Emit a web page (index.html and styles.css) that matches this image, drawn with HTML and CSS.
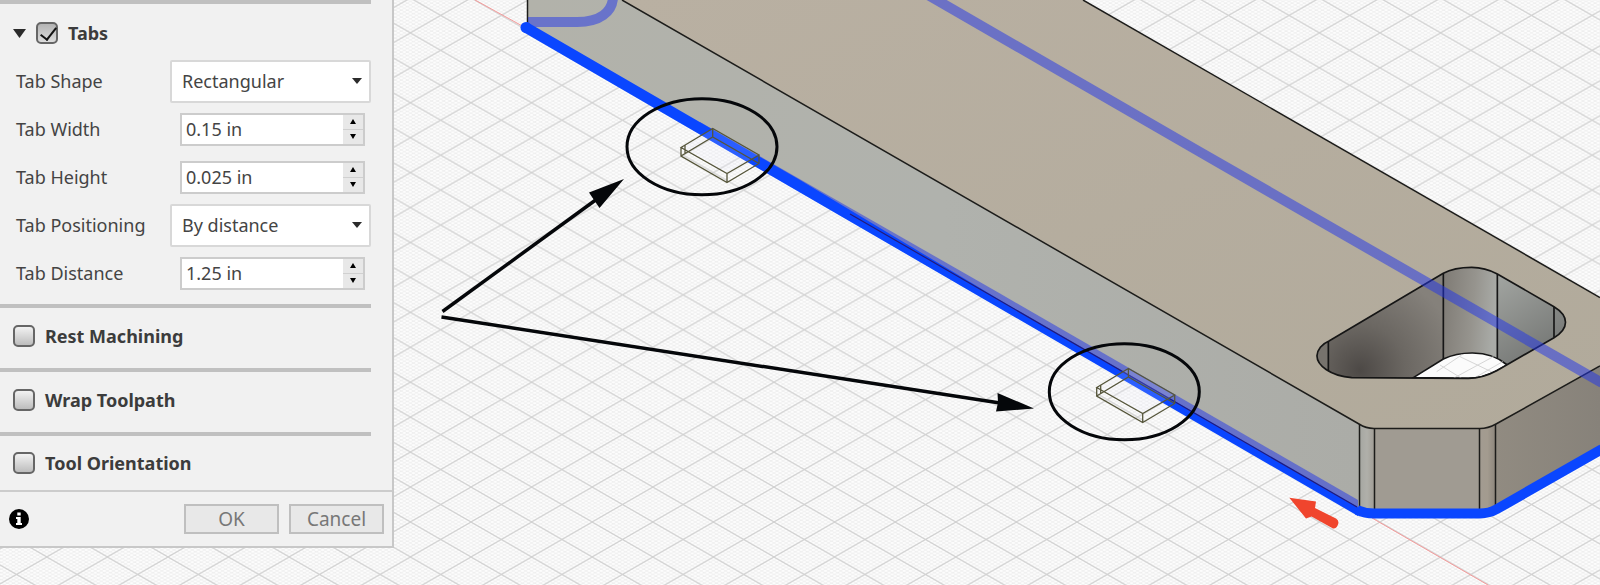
FILE: index.html
```
<!DOCTYPE html>
<html lang="en">
<head>
    <meta charset="UTF-8">
    <meta name="viewport" content="width=device-width, initial-scale=1.0">
    <title>2D Contour - Tabs</title>
    <link rel="stylesheet" href="styles.css">
</head>
<body>

<div class="workspace">

    <!-- Model view -->
    <svg class="model-view" viewBox="0 0 1600 585" preserveAspectRatio="xMinYMin slice" role="img" aria-label="Part with tabs on the contour">
        <defs>
            <pattern id="grid-minor" width="6.06" height="3.494" patternUnits="userSpaceOnUse" patternTransform="translate(410.4 522)">
                <path d="M0 0L6.06 3.494M0 3.494L6.06 0" stroke="#e6e6e6" stroke-width="0.6"/>
            </pattern>
            <pattern id="grid-major" width="60.6" height="34.94" patternUnits="userSpaceOnUse" patternTransform="translate(410.4 522)">
                <path d="M0 0L60.6 34.94M0 34.94L60.6 0" stroke="#d0d0d0" stroke-width="1.1"/>
            </pattern>
            <linearGradient id="top-face" x1="0" y1="0" x2="1" y2="1">
                <stop offset="0" stop-color="#b9b0a2"/>
                <stop offset="1" stop-color="#b1aa9b"/>
            </linearGradient>
            <linearGradient id="side-face" x1="0" y1="0" x2="1" y2="0">
                <stop offset="0" stop-color="#b2b2aa"/>
                <stop offset="0.5" stop-color="#b0b2ad"/>
                <stop offset="1" stop-color="#abaca7"/>
            </linearGradient>
            <linearGradient id="right-face" x1="0" y1="0" x2="1" y2="0">
                <stop offset="0" stop-color="#918b81"/>
                <stop offset="1" stop-color="#87827a"/>
            </linearGradient>
            <linearGradient id="corner-left" x1="0" y1="0" x2="1" y2="0">
                <stop offset="0" stop-color="#a5a6a1"/>
                <stop offset="0.5" stop-color="#b0b0aa"/>
                <stop offset="1" stop-color="#a09c94"/>
            </linearGradient>
            <linearGradient id="corner-right" x1="0" y1="0" x2="1" y2="0">
                <stop offset="0" stop-color="#a29b91"/>
                <stop offset="0.5" stop-color="#a39b8f"/>
                <stop offset="1" stop-color="#8d867c"/>
            </linearGradient>
            <radialGradient id="slot-left" gradientUnits="userSpaceOnUse" cx="240" cy="390" r="300">
                <stop offset="0" stop-color="#4d4946"/>
                <stop offset="0.45" stop-color="#6b6762"/>
                <stop offset="1" stop-color="#85817b"/>
            </radialGradient>
            <linearGradient id="slot-mid" x1="0" y1="0" x2="1" y2="0.2">
                <stop offset="0" stop-color="#7e7a74"/>
                <stop offset="0.6" stop-color="#96948e"/>
                <stop offset="1" stop-color="#a9aba7"/>
            </linearGradient>
            <linearGradient id="slot-right" x1="0" y1="0" x2="0.4" y2="1">
                <stop offset="0" stop-color="#a7aaa6"/>
                <stop offset="1" stop-color="#6f716f"/>
            </linearGradient>
            <clipPath id="slot-clip">
                <path d="M147 303L490 100C515 86 545 82 575 82C605 82 630 90 652 102L822 200C868 228 868 265 822 293L650 392C620 408 595 415 565 415L215 413C150 408 110 375 111 347C112 330 125 312 147 303Z"/>
            </clipPath>
            <g id="tab-box">
                <path d="M681 147.500L712.700 128.500L759 155L727 173.500Z" fill="#e8e8ff" fill-opacity="0.15"/>
                <path d="M681 147.500L712.700 128.500L759 155L727 173.500ZM681 147.500V156L727 182.500L759 163.500V155M727 173.500V182.500M681 156L712.700 137L759 163.500M712.700 128.500V137M685 145.500V153.500" fill="none" stroke="#55553a" stroke-width="1.3"/>
            </g>
        </defs>

        <rect width="1600" height="585" fill="#fdfdfd"/>
        <rect width="1600" height="585" fill="url(#grid-minor)"/>
        <rect width="1600" height="585" fill="url(#grid-major)"/>

        <!-- X axis -->
        <path d="M475 0L526 28M1372 518L1488 585" stroke="#f59a9a" stroke-width="1"/>

        <!-- Part faces -->
        <path d="M622 0H1083L1600 297.500V366L1496 424Q1488 428.500 1480 428.500H1374Q1366 428.500 1359 424Z" fill="url(#top-face)"/>
        <path d="M527 0H622L1359.500 424V509L527 27Z" fill="url(#side-face)"/>
        <path d="M1359.500 424Q1366 428.500 1374.500 428.500V512L1359.500 509Z" fill="url(#corner-left)"/>
        <rect x="1374.500" y="428.500" width="105" height="84" fill="#a09b92"/>
        <path d="M1479.500 428.500Q1488 428.500 1495.500 424V509L1479.500 512Z" fill="url(#corner-right)"/>
        <path d="M1495.500 424L1600 366V449L1495.500 509Z" fill="url(#right-face)"/>

        <!-- Slot -->
        <g transform="translate(1280 240) scale(0.33333)" stroke-width="5" stroke="#161616" fill="none">
            <g clip-path="url(#slot-clip)">
                <rect x="100" y="70" width="390" height="360" fill="url(#slot-left)" stroke="none"/>
                <rect x="490" y="70" width="162" height="360" fill="url(#slot-mid)" stroke="none"/>
                <rect x="652" y="70" width="220" height="360" fill="url(#slot-right)" stroke="none"/>
                <rect x="100" y="290" width="45" height="130" fill="#77736d" stroke="none"/>
                <path d="M400 413L490 357C530 338 620 322 682 375L650 392C620 408 595 415 565 415Z" fill="#fbfbfb"/>
                <path d="M470 395L545 345M520 415L640 350M590 410L668 365M480 375L545 415M540 350L640 398" stroke="#d5d5d5" stroke-width="3"/>
                <path d="M145 303V393M490 100V357M652 102V355M822 200V293"/>
            </g>
            <path d="M147 303L490 100C515 86 545 82 575 82C605 82 630 90 652 102L822 200C868 228 868 265 822 293L650 392C620 408 595 415 565 415L215 413C150 408 110 375 111 347C112 330 125 312 147 303Z"/>
        </g>

        <!-- Part edges -->
        <g fill="none" stroke="#1c1c1a" stroke-width="1.5">
            <path d="M622 0L1359 424Q1366 428.500 1374 428.500H1480Q1488 428.500 1496 424L1600 366"/>
            <path d="M1083 0L1600 297.500"/>
            <path d="M527.500 0V26M1359.500 424V508M1374.500 428.500V512M1479.500 428.500V512M1495.500 424V508"/>
        </g>

        <!-- Hidden contour seen through the part -->
        <g fill="none" stroke="#1f33ea" stroke-opacity="0.5">
            <path d="M928 -5L1200 152L1602 383" stroke-width="10"/>
            <path d="M528 22H577C600 22 612 12 613 -2" stroke-width="10"/>
        </g>
        <path d="M700 122L1000 293.500L1358 500V507L1000 301L700 124Z" fill="#1f33ea" fill-opacity="0.5"/>

        <!-- Contour -->
        <path d="M527 22L800 180L1000 300L1358 507V516L524 32.500Z" fill="#0a46ff"/>
        <circle cx="526" cy="27.500" r="5.500" fill="#0a46ff"/>
        <path d="M1357 510Q1365 513.500 1374 513.500H1480Q1489 513.500 1497 509L1602 449" fill="none" stroke="#0a46ff" stroke-width="10"/>
        <path d="M850 214L1357 507" stroke="#241a78" stroke-width="1.2"/>

        <use href="#tab-box"/>
        <use href="#tab-box" x="415.700" y="240"/>

        <!-- Direction arrow -->
        <path d="M1289.300 497.700L1316 501.500L1315 508L1336 518.500Q1339.500 521 1338 524.500Q1336.500 529 1333 528.500L1311.500 516.500L1306 518.500Z" fill="#f0452d"/>

        <!-- Callouts -->
        <g fill="none" stroke="#05070a" stroke-width="3">
            <ellipse cx="702" cy="146.700" rx="75" ry="48"/>
            <ellipse cx="1124.300" cy="391.700" rx="75" ry="48"/>
            <path d="M442.500 311.500L597 199" stroke-width="3.500"/>
            <path d="M441.500 317L1000 403" stroke-width="3.500"/>
        </g>
        <path d="M624 179L589 192.500L594 200L599.500 208ZM1034 408.500L997.500 393L998 402.500L996 411.500Z" fill="#05070a"/>
    </svg>

    <!-- Tool panel -->
    <form class="panel">
        <div class="section">
            <div class="section-header open">
                <svg class="collapse-icon" viewBox="0 0 13 9" aria-hidden="true"><path d="M0 0H13L6.500 9Z" fill="#2b2b2b"/></svg>
                <input type="checkbox" id="tabs" checked>
                <label for="tabs">Tabs</label>
            </div>

            <div class="field">
                <label for="tab-shape">Tab Shape</label>
                <div class="select-box">
                    <select id="tab-shape">
                        <option>Rectangular</option>
                        <option>Triangular</option>
                    </select>
                    <svg viewBox="0 0 10 6" aria-hidden="true"><path d="M0 0H10L5 6Z" fill="#2b2b2b"/></svg>
                </div>
            </div>

            <div class="field">
                <label for="tab-width">Tab Width</label>
                <div class="number-box">
                    <input type="text" id="tab-width" value="0.15 in">
                    <div class="spinner">
                        <button type="button" aria-label="Increase width"><svg viewBox="0 0 6 5"><path d="M0 5H6L3 0Z"/></svg></button>
                        <button type="button" aria-label="Decrease width"><svg viewBox="0 0 6 5"><path d="M0 0H6L3 5Z"/></svg></button>
                    </div>
                </div>
            </div>

            <div class="field">
                <label for="tab-height">Tab Height</label>
                <div class="number-box">
                    <input type="text" id="tab-height" value="0.025 in">
                    <div class="spinner">
                        <button type="button" aria-label="Increase height"><svg viewBox="0 0 6 5"><path d="M0 5H6L3 0Z"/></svg></button>
                        <button type="button" aria-label="Decrease height"><svg viewBox="0 0 6 5"><path d="M0 0H6L3 5Z"/></svg></button>
                    </div>
                </div>
            </div>

            <div class="field">
                <label for="tab-positioning">Tab Positioning</label>
                <div class="select-box">
                    <select id="tab-positioning">
                        <option>By distance</option>
                        <option>At points</option>
                    </select>
                    <svg viewBox="0 0 10 6" aria-hidden="true"><path d="M0 0H10L5 6Z" fill="#2b2b2b"/></svg>
                </div>
            </div>

            <div class="field">
                <label for="tab-distance">Tab Distance</label>
                <div class="number-box">
                    <input type="text" id="tab-distance" value="1.25 in">
                    <div class="spinner">
                        <button type="button" aria-label="Increase distance"><svg viewBox="0 0 6 5"><path d="M0 5H6L3 0Z"/></svg></button>
                        <button type="button" aria-label="Decrease distance"><svg viewBox="0 0 6 5"><path d="M0 0H6L3 5Z"/></svg></button>
                    </div>
                </div>
            </div>
        </div>

        <div class="section">
            <div class="section-header">
                <input type="checkbox" id="rest-machining">
                <label for="rest-machining">Rest Machining</label>
            </div>
        </div>

        <div class="section">
            <div class="section-header">
                <input type="checkbox" id="wrap-toolpath">
                <label for="wrap-toolpath">Wrap Toolpath</label>
            </div>
        </div>

        <div class="section">
            <div class="section-header">
                <input type="checkbox" id="tool-orientation">
                <label for="tool-orientation">Tool Orientation</label>
            </div>
        </div>

        <div class="panel-footer">
            <svg class="info-icon" viewBox="0 0 20 20" role="img" aria-label="Info">
                <circle cx="10" cy="10" r="10" fill="#000"/>
                <path d="M8.300 3.500H11.700V6.500H8.300ZM7 8H11.700V14H13V16H7V14H8.300V10H7Z" fill="#fff"/>
            </svg>
            <button type="button" class="footer-btn">OK</button>
            <button type="button" class="footer-btn">Cancel</button>
        </div>
    </form>

</div>

</body>
</html>
```
FILE: styles.css
```
* {
    box-sizing: border-box;
}

body {
    margin: 0;
    font-family: "Lucida Grande", "Noto Sans", sans-serif;
    font-size: 18px;
    color: #444;
    background-color: #fdfdfd;
}

.workspace {
    display: grid;
    min-height: 100vh;
    overflow: hidden;
}

/* the panel floats over the model view, both share one cell */
.model-view,
.panel {
    grid-area: 1 / 1;
}

.model-view {
    width: 100%;
    height: 100vh;
}

.panel {
    position: relative;
    justify-self: start;
    align-self: start;
    width: 394px;
    background-color: #f1f1f1;
    border-right: 2px solid #c8c8c8;
    border-bottom: 2px solid #c8c8c8;
}

.section {
    margin-right: 21px;
    padding-bottom: 4px;
    border-top: 4px solid #c0c0c0;
}

.section:first-child {
    padding-bottom: 7px;
}

.section-header {
    display: flex;
    align-items: center;
    gap: 10px;
    height: 56px;
    padding-left: 13px;
    font-weight: bold;
    color: #3c3c3c;
}

.section-header.open {
    height: 53px;
    padding-top: 5px;
}

.collapse-icon {
    width: 13px;
    height: 9px;
}

input[type="checkbox"] {
    appearance: none;
    width: 22px;
    height: 22px;
    margin: 0;
    border: 2px solid #666;
    border-radius: 5px;
    background: linear-gradient(#f2f2f2, #bdbdbd);
}

input[type="checkbox"]:checked {
    background: linear-gradient(#b4b4b4, #dcdcdc);
}

input[type="checkbox"]:checked::after {
    content: "";
    display: block;
    width: 7px;
    height: 14px;
    margin-left: 6px;
    border: solid #111;
    border-width: 0 2px 2px 0;
    transform: rotate(38deg);
}

.field {
    display: grid;
    grid-template-columns: 154px minmax(0, 1fr);
    align-items: center;
    height: 48px;
    padding-left: 16px;
}

.select-box {
    position: relative;
}

.select-box select {
    appearance: none;
    display: block;
    width: 100%;
    height: 43px;
    padding: 0 10px;
    font: inherit;
    color: inherit;
    background-color: #fff;
    border: 2px solid #d8d8d8;
    border-radius: 2px;
}

.select-box svg {
    position: absolute;
    top: 18px;
    right: 9px;
    width: 10px;
    height: 6px;
    pointer-events: none;
}

.number-box {
    display: flex;
    height: 33px;
    margin: 0 6px 0 10px;
    background-color: #fff;
    border: 2px solid #ccc;
}

.number-box input {
    flex: 1;
    min-width: 0;
    padding: 0 4px;
    font: inherit;
    color: inherit;
    background: none;
    border: none;
}

.spinner {
    display: flex;
    flex-direction: column;
    width: 20px;
}

.spinner button {
    display: flex;
    flex: 1;
    align-items: center;
    justify-content: center;
    padding: 0;
    background-color: #e8e8e8;
    border: none;
}

.spinner button + button {
    border-top: 1px solid #d0d0d0;
}

.spinner svg {
    width: 6px;
    height: 5px;
}

/* last section ends right above the footer line */
.section:nth-child(4) {
    padding-bottom: 0;
}

.section:nth-child(4) .section-header {
    height: 54px;
}

.panel-footer {
    display: flex;
    align-items: center;
    gap: 10px;
    height: 56px;
    padding: 0 8px 0 9px;
    border-top: 2px solid #ccc;
}

.info-icon {
    width: 20px;
    height: 20px;
    margin-right: auto;
}

.footer-btn {
    width: 95px;
    height: 30px;
    padding: 0;
    font: inherit;
    font-size: 19px;
    line-height: 1;
    color: #777;
    background-color: #e8e8e8;
    border: 2px solid #bfbfbf;
}
```
